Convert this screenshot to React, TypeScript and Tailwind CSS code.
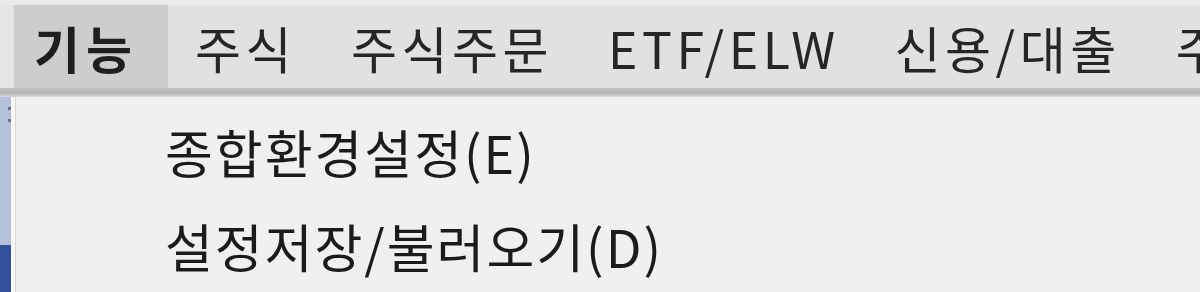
const MENUS = ['주식', '주식주문', 'ETF/ELW', '신용/대출', '주문'];

const ITEMS = ['종합환경설정(E)', '설정저장/불러오기(D)'];

export default function App() {
  return (
    <div
      className="w-[1200px] h-[292px] overflow-hidden bg-[#f0f0f0] flex flex-col"
      style={{ fontFamily: '"Noto Sans CJK KR", "Noto Sans", sans-serif' }}>
      {/* menu bar */}
      <div className="h-[5px] bg-[#ebebeb]" />
      <div className="h-[83px] bg-[#e1e1e1] flex items-stretch whitespace-nowrap text-[50px] leading-none text-[#262626] overflow-hidden">
        <div className="w-[14px] shrink-0 bg-[#e6e6e6]" />
        <div className="w-[154px] shrink-0 bg-[#cdcdcd] flex items-center pl-[20px] font-bold tracking-[6px] text-[#1f1f1f]">
          기능
        </div>
        <div className="flex shrink-0 items-center gap-[55px] pl-[27px] tracking-[4.5px]">
          {MENUS.map((m) => (
            <span key={m}>{m}</span>
          ))}
        </div>
      </div>
      <div className="h-[9px] bg-gradient-to-b from-[#c4c4c4] via-[#b4b4b4] to-[#d6d6d6]" />

      {/* dropdown */}
      <div className="flex-1 flex">
        <div className="w-[11px] flex flex-col">
          <div className="flex-1 bg-[#b3c0dc] flex flex-col items-end pt-[10px] gap-[9px]">
            <div className="w-[3px] h-[3px] bg-[#6a7390]" />
            <div className="w-[3px] h-[3px] bg-[#6a7390]" />
          </div>
          <div className="h-[47px] bg-[#34509a]" />
        </div>
        <div className="w-[4px] bg-[#f7f7f7]" />
        <div className="w-[1px] bg-[#d8d8d8]" />
        <div className="flex-1 flex flex-col pl-[149px] pt-[28px] gap-[40px] text-[52px] leading-[54px] tracking-[2px] text-[#1b1b1b]">
          {ITEMS.map((it) => (
            <div key={it} className="whitespace-nowrap">
              {it}
            </div>
          ))}
        </div>
      </div>
    </div>
  );
}
